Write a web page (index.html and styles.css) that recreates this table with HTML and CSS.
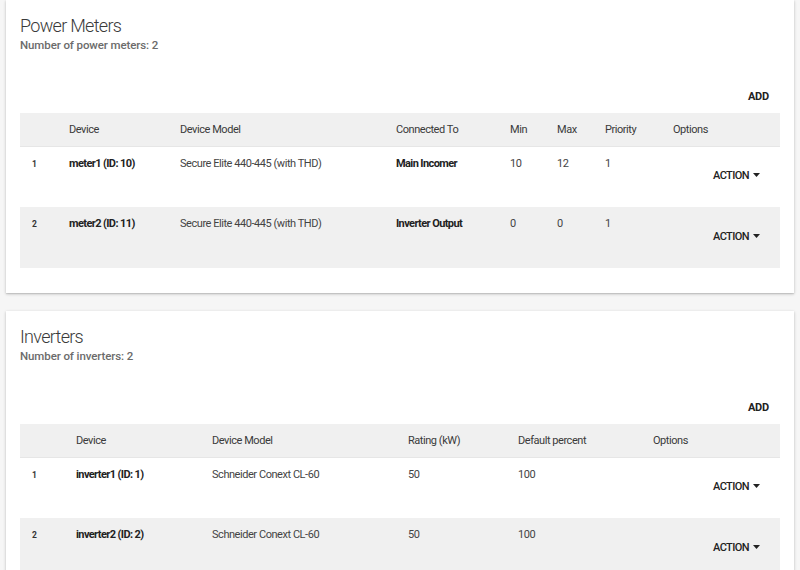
FILE: index.html
```html
<!DOCTYPE html>
<html>
<head>
<meta charset="utf-8">
<link rel="stylesheet" href="styles.css">
</head>
<body>
<div class="page">
  <section class="card">
    <h2 class="title">Power Meters</h2>
    <div class="subtitle">Number of power meters: 2</div>
    <div class="toolbar"><span class="add">ADD</span></div>
    <table class="tbl meters">
      <colgroup>
        <col class="w37"><col class="w111"><col class="w216"><col class="w114"><col class="w47"><col class="w48"><col class="w68"><col class="w119">
      </colgroup>
      <thead>
        <tr><th></th><th>Device</th><th>Device Model</th><th>Connected To</th><th>Min</th><th>Max</th><th>Priority</th><th>Options</th></tr>
      </thead>
      <tbody>
        <tr>
          <td class="idx">1</td><td class="strong">meter1 (ID: 10)</td><td>Secure Elite 440-445 (with THD)</td><td class="strong">Main Incomer</td><td>10</td><td>12</td><td>1</td>
          <td class="act"><span class="action">ACTION <svg class="caret" width="7" height="4" viewBox="0 0 7 4"><path d="M0 0h7L3.5 4z" fill="#222"/></svg></span></td>
        </tr>
        <tr class="alt">
          <td class="idx">2</td><td class="strong">meter2 (ID: 11)</td><td>Secure Elite 440-445 (with THD)</td><td class="strong">Inverter Output</td><td>0</td><td>0</td><td>1</td>
          <td class="act"><span class="action">ACTION <svg class="caret" width="7" height="4" viewBox="0 0 7 4"><path d="M0 0h7L3.5 4z" fill="#222"/></svg></span></td>
        </tr>
      </tbody>
    </table>
  </section>

  <section class="card">
    <h2 class="title">Inverters</h2>
    <div class="subtitle">Number of inverters: 2</div>
    <div class="toolbar"><span class="add">ADD</span></div>
    <table class="tbl inverters">
      <colgroup>
        <col class="w44"><col class="w136"><col class="w196"><col class="w110"><col class="w135"><col class="w139">
      </colgroup>
      <thead>
        <tr><th></th><th>Device</th><th>Device Model</th><th>Rating (kW)</th><th>Default percent</th><th>Options</th></tr>
      </thead>
      <tbody>
        <tr>
          <td class="idx">1</td><td class="strong">inverter1 (ID: 1)</td><td>Schneider Conext CL-60</td><td>50</td><td>100</td>
          <td class="act"><span class="action">ACTION <svg class="caret" width="7" height="4" viewBox="0 0 7 4"><path d="M0 0h7L3.5 4z" fill="#222"/></svg></span></td>
        </tr>
        <tr class="alt">
          <td class="idx">2</td><td class="strong">inverter2 (ID: 2)</td><td>Schneider Conext CL-60</td><td>50</td><td>100</td>
          <td class="act"><span class="action">ACTION <svg class="caret" width="7" height="4" viewBox="0 0 7 4"><path d="M0 0h7L3.5 4z" fill="#222"/></svg></span></td>
        </tr>
      </tbody>
    </table>
  </section>
</div>
</body>
</html>
```

FILE: styles.css
```css
html, body {
  margin: 0;
  padding: 0;
  background: #f6f6f6;
  font-family: Roboto, "Liberation Sans", sans-serif;
  color: #333;
}
.page {
  display: flex;
  flex-direction: column;
  gap: 18px;
  padding: 0 6px;
}
.card {
  background: #fff;
  box-shadow: 0 1px 3px rgba(0,0,0,0.22), 0 1px 1px rgba(0,0,0,0.08);
  padding: 15px 14px 25px;
}
.title {
  margin: 0;
  font-size: 18px;
  line-height: 22px;
  font-weight: 300;
  letter-spacing: -0.7px;
  color: #3a3a3a;
}
.subtitle {
  margin-top: 0;
  font-size: 11.5px;
  line-height: 16px;
  font-weight: 500;
  letter-spacing: -0.1px;
  color: #6b6b6b;
}
.toolbar {
  display: flex;
  justify-content: flex-end;
  margin-top: 36px;
  margin-bottom: 8px;
  padding-right: 11px;
}
.add {
  font-size: 11px;
  line-height: 16px;
  font-weight: 700;
  letter-spacing: -0.2px;
  color: #222;
}
.tbl {
  width: 100%;
  border-collapse: collapse;
  table-layout: fixed;
  font-size: 11px;
  letter-spacing: -0.45px;
}
.tbl th {
  background: #f0f0f0;
  height: 33px;
  padding: 1px 0 0 12px;
  text-align: left;
  font-weight: 400;
  color: #3a3a3a;
  border-bottom: 1px solid #e6e6e6;
  box-sizing: border-box;
}
.tbl td {
  height: 61px;
  padding: 10px 0 0 12px;
  vertical-align: top;
  color: #444;
  line-height: 13px;
  box-sizing: border-box;
}
.tbl tr.alt td { background: #f0f0f0; }
.tbl td.strong { font-weight: 700; color: #222; letter-spacing: -0.6px; }
.tbl td.idx { font-size: 8.5px; font-weight: 700; color: #333; padding-top: 11px; letter-spacing: 0; }
.tbl td.act {
  vertical-align: middle;
  text-align: right;
  padding: 0 20px 3px 0;
}
.action {
  font-size: 11px;
  font-weight: 500;
  letter-spacing: -0.6px;
  color: #222;
  white-space: nowrap;
}
.caret { vertical-align: middle; margin-left: 2px; position: relative; top: -1px; }
.w37 { width: 37px; } .w111 { width: 111px; } .w216 { width: 216px; } .w114 { width: 114px; }
.w47 { width: 47px; } .w48 { width: 48px; } .w68 { width: 68px; } .w119 { width: 119px; }
.w44 { width: 44px; } .w136 { width: 136px; } .w196 { width: 196px; } .w110 { width: 110px; }
.w135 { width: 135px; } .w139 { width: 139px; }
```
